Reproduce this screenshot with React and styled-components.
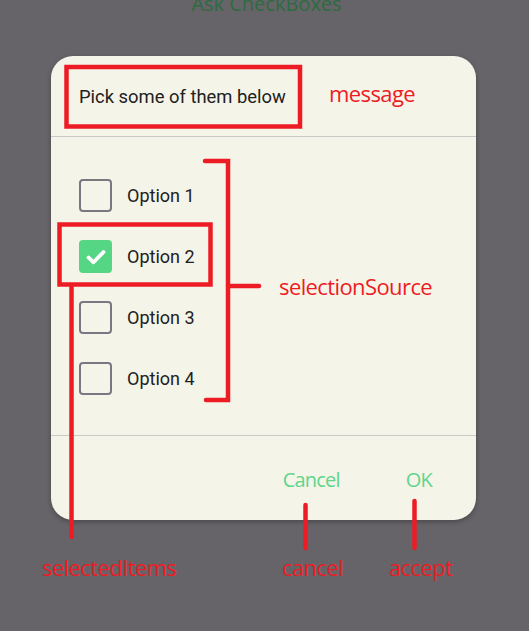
import React, { useState } from 'react';
import styled, { createGlobalStyle } from 'styled-components';

const GlobalStyle = createGlobalStyle`
    html, body {
        margin: 0;
        padding: 0;
        background: #666468;
    }
`;

const options = ['Option 1', 'Option 2', 'Option 3', 'Option 4'];

const CheckIcon = () => (
    <svg width="24" height="24" viewBox="0 0 24 24">
        <path d="M4.5 12.5l5 4.8L19.5 7" fill="none" stroke="#fff" strokeWidth="3.8"
            strokeLinecap="round" strokeLinejoin="round" />
    </svg>
);

const App = () => {
    const [selected, setSelected] = useState(['Option 2']);

    const toggle = (opt) => {
        setSelected((s) => s.includes(opt) ? s.filter((o) => o !== opt) : [...s, opt]);
    };

    return (
        <Page>
            <GlobalStyle />
            <PageTitle>Ask CheckBoxes</PageTitle>
            <Dialog>
                <DialogHeader>
                    <Message>Pick some of them below</Message>
                </DialogHeader>
                <OptionList>
                    {options.map((opt) => {
                        const checked = selected.includes(opt);
                        return (
                            <OptionRow key={opt} onClick={() => toggle(opt)}>
                                <Box $checked={checked}>{checked && <CheckIcon />}</Box>
                                <OptionLabel>{opt}</OptionLabel>
                            </OptionRow>
                        );
                    })}
                </OptionList>
                <DialogFooter>
                    <TextButton>Cancel</TextButton>
                    <TextButton>OK</TextButton>
                </DialogFooter>
            </Dialog>

            {/* annotation layer */}
            <Marks width="529" height="631" viewBox="0 0 529 631">
                <g fill="none" stroke="#ed1c24" strokeWidth="4.5" strokeLinecap="round">
                    <rect x="66.5" y="67" width="233.5" height="59.5" strokeLinecap="butt" />
                    <rect x="59.5" y="224.5" width="151" height="60" strokeLinecap="butt" />
                    <path d="M205 161H228V400H206" strokeLinejoin="miter" />
                    <path d="M228 286H259" />
                    <path d="M71.5 287V537" />
                    <path d="M305.5 505V548" />
                    <path d="M414.5 501V548" />
                </g>
            </Marks>
            <Label $x={329} $y={78}>message</Label>
            <Label $x={279} $y={271}>selectionSource</Label>
            <Label $x={42} $y={552}>selectedItems</Label>
            <Label $x={282} $y={552}>cancel</Label>
            <Label $x={389} $y={552}>accept</Label>
        </Page>
    );
};

export default App;


const Page = styled.div`
    position: relative;
    width: 529px;
    height: 631px;
    overflow: hidden;
    background: #666468;
    font-family: 'Roboto', 'Liberation Sans', sans-serif;
`

const PageTitle = styled.div`
    margin-top: -6px;
    height: 20px;
    line-height: 20px;
    text-align: center;
    font-family: 'Open Sans', sans-serif;
    font-size: 20px;
    color: #2d6b40;
    padding-left: 4px;
`

const Dialog = styled.div`
    width: 425px;
    margin: 42px 0 0 51px;
    background: #f5f4e8;
    border-radius: 22px;
    box-shadow: 0 2px 5px rgba(0, 0, 0, 0.28);
    overflow: hidden;
`

const DialogHeader = styled.div`
    height: 80px;
    display: flex;
    align-items: center;
    padding-left: 28px;
    border-bottom: 1px solid #c9c9c5;
`

const Message = styled.span`
    font-size: 18.4px;
    color: #212121;
`

const OptionList = styled.div`
    display: flex;
    flex-direction: column;
    padding: 28px 0 26px;
    border-bottom: 1px solid #c9c9c5;
`

const OptionRow = styled.div`
    height: 61px;
    display: flex;
    align-items: center;
    gap: 15px;
    padding-left: 28px;
    cursor: pointer;
`

const Box = styled.div`
    box-sizing: border-box;
    width: 33px;
    height: 33px;
    border-radius: 4px;
    display: flex;
    align-items: center;
    justify-content: center;
    border: ${(p) => p.$checked ? 'none' : '2.5px solid #7b7780'};
    background: ${(p) => p.$checked ? '#55d685' : 'transparent'};
`

const OptionLabel = styled.span`
    font-size: 18px;
    color: #212121;
`

const DialogFooter = styled.div`
    height: 84px;
    box-sizing: border-box;
    display: flex;
    justify-content: flex-end;
    align-items: flex-start;
    gap: 66px;
    padding: 32px 44px 0 0;
`

const TextButton = styled.button`
    border: none;
    background: none;
    padding: 0;
    line-height: 24px;
    font-family: 'Open Sans', sans-serif;
    font-size: 20px;
    letter-spacing: -0.8px;
    color: #5ed68b;
    cursor: pointer;
`

const Marks = styled.svg`
    position: absolute;
    left: 0;
    top: 0;
    pointer-events: none;
`

const Label = styled.div`
    position: absolute;
    left: ${(p) => p.$x}px;
    top: ${(p) => p.$y}px;
    line-height: 30px;
    font-family: 'Open Sans', sans-serif;
    font-size: 22px;
    letter-spacing: -0.6px;
    color: #ed1c24;
    white-space: nowrap;
`
